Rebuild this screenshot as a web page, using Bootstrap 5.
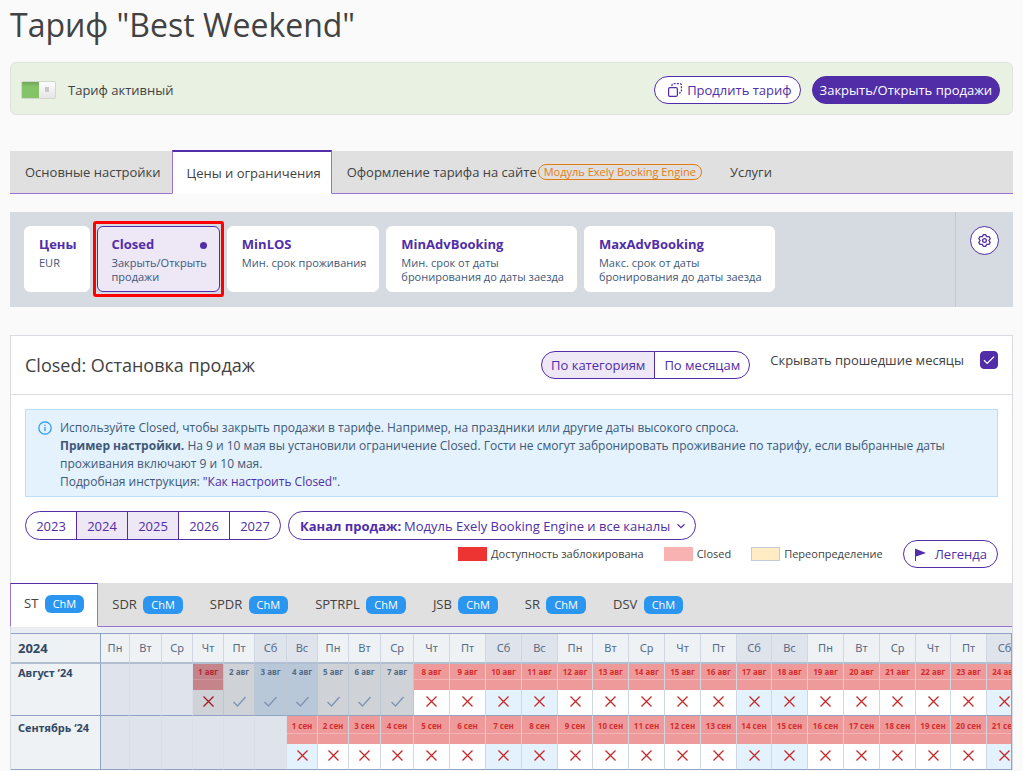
<!DOCTYPE html>
<html lang="ru">
<head>
<meta charset="utf-8">
<meta name="viewport" content="width=device-width, initial-scale=1">
<title>Тариф "Best Weekend"</title>
<link href="https://cdn.jsdelivr.net/npm/bootstrap@5.3.0/dist/css/bootstrap.min.css" rel="stylesheet">
<style>
:root { --violet: #512da8; --violet-soft: #ede7f6; --violet-line: #9575cd; --ink: #424242; --slate: #3f5878; }
body { font: 13px/18px "Open Sans", "Noto Sans", sans-serif; color: var(--ink); background: #fafafa; }
.page { padding: 0 10px; }
.page-title { font-size: 32px; line-height: 48px; padding-top: 1px; margin-bottom: 13px; font-weight: 400; }
a { color: var(--violet); text-decoration: none; }

.status-bar { background: #e8f1e2; border: 1px solid #dfe2df; border-radius: 6px; padding: 13px 12px 10px 10px; margin-bottom: 36px; }
.state-toggle { appearance: none; width: 35px; height: 18px; margin: 0; border-radius: 2px; border: 1px solid #cfd8ca;
  background: linear-gradient(#c8c8c8, #c8c8c8) 23px 5px / 4px 5px no-repeat, linear-gradient(#fdfdfd, #e2e2e2) 17px 0 / 18px 18px no-repeat, linear-gradient(#6fa857, #85c368 30%); }
.pill { font-size: 13px; line-height: 18px; padding: 4px 8px; border: 1px solid var(--violet); border-radius: 15px; color: var(--violet); background: #fff; }
.pill:hover, .pill.chosen { color: var(--violet); background: var(--violet-soft); border-color: var(--violet); }
.pill-solid { padding: 4px 7px; margin-left: 11px; }
.pill-solid, .pill-solid:hover { background: var(--violet); color: #fff; }

.strip { background: #e0e0e0; border: 0; }
.strip .nav-link { color: var(--ink); border: 0; border-bottom: 1px solid var(--violet-line); border-radius: 0; margin: 0; background: none; }
.strip .nav-link.active { color: var(--ink); background: #fff; border: 1px solid var(--violet-line); border-bottom-color: #fff; }
.strip .filler { border-bottom: 1px solid var(--violet-line); }
.strip-main { margin-bottom: 18px; }
.strip-main .nav-link { padding: 12px 11px 12px 15px; }
.strip-main .nav-link.active { border-top: 2px solid var(--violet); margin-top: -1px; padding: 12px 10px 11px 14px; }
.module-tag { font-size: 11px; line-height: 14px; color: #e57c13; border: 1px solid #e57c13; border-radius: 8px; padding: 0 5px; margin: 0 2px 0 1px; }

.modes { background: #d6dbe2; margin-bottom: 28px; }
.modes-list { padding: 14px 14px 15px; gap: 7px; }
.mode { background: #fff; border: 1px solid #fff; border-radius: 6px; padding: 8px 12px 7px 14px; min-height: 66px; text-align: left; color: var(--slate); font-size: 11px; line-height: 14px; }
.mode b { font-size: 13px; line-height: 18px; color: var(--violet); margin-bottom: 3px; }
.mode.chosen { background: var(--violet-soft); border-color: var(--violet); }
.mode .dot { width: 7px; height: 7px; background: var(--violet); }
.highlight { position: absolute; inset: -5px -4px; border: 3px solid #f00; border-radius: 3px; pointer-events: none; }
.modes-side { border-left: 1px solid #c3c9d3; padding: 14px; }
.gear { width: 29px; height: 29px; border: 1px solid var(--violet); border-radius: 50%; background: #fff; color: var(--violet); }

.board { background: #fff; border: 1px solid #d9dbe3; border-bottom: 0; }
.board-head { border-bottom: 1px solid #dcdce2; padding: 15px 14px; }
.board-title { font-size: 18px; line-height: 28px; font-weight: 400; margin: 0; }
.form-check-input.past { width: 18px; height: 18px; border-radius: 4px; margin: 0; }
.form-check-input.past:checked { background-color: var(--violet); border-color: var(--violet);
  background-image: url("data:image/svg+xml,%3Csvg xmlns='http://www.w3.org/2000/svg' viewBox='0 0 16 16'%3E%3Cpath d='M3 8.2l3.2 3.2L13 4.6' fill='none' stroke='%23fff' stroke-width='1.3'/%3E%3C/svg%3E"); }
.note { background-color: #e3f2fd; border: 1px solid #bbdefb; color: var(--slate); font-size: 12px; margin: 14px; padding: 9px 12px 5px; gap: 8px; }
.note svg { margin-top: 2px; }
.split { border-radius: 15px; }
.split .btn { padding: 4px 9px; }
.filters { padding: 0 14px; gap: 7px; }
.filters .pill { min-width: 52px; padding: 5px 9px 4px; }
.filters .channel { gap: 3px; padding-left: 11px; }
.channel select { appearance: none; border: 0; font: inherit; color: inherit; padding: 0 15px 0 0; outline: 0;
  background: url("data:image/svg+xml,%3Csvg xmlns='http://www.w3.org/2000/svg' viewBox='0 0 10 10'%3E%3Cpath d='M1.5 3.2 5 6.6l3.5-3.4' fill='none' stroke='%23512da8' stroke-width='1.2'/%3E%3C/svg%3E") right center / 10px 10px no-repeat; }
.keys { font-size: 11px; padding: 0 14px 15px; }
.keys .pill { padding: 4px 10px; }
.swatch { width: 29px; height: 14px; }
.swatch-blocked { background: #ee3333; }
.swatch-closed { background: #f9b2b2; }
.swatch-override { background: #ffecc4; border: 1px solid #c5cad8; }
.strip-rooms .nav-link { padding: 12px 13px 12px 14px; }
.strip-rooms .nav-link.active { padding: 10px 13px 13px; border-top-color: var(--violet); margin-left: -1px; }
.chm { font-size: 11px; line-height: 18px; color: #fff; background: #2a96f0; border-radius: 6px; padding: 0 8px; margin-left: 3px; }

.calendar-wrap { background: #eaedf1; padding-top: 6px; overflow: hidden; }
.calendar-view { border: 1px solid #8fa3c2; border-bottom: 0; margin-left: -1px; overflow: hidden; }
.calendar { table-layout: fixed; width: 0; border-collapse: separate; border-spacing: 0; font-family: "Noto Sans", sans-serif; color: #566b88; }
.calendar th, .calendar td { padding: 0; vertical-align: top; border-right: 1px solid #d0d7e3; border-bottom: 1px solid #8fa3c2; text-align: center; white-space: nowrap; }
.calendar td { background: #fff; }
.calendar thead th { height: 30px; vertical-align: middle; font-size: 11px; font-weight: 400; background: #eef2f5; border-bottom: 2px solid #b0bed2; }
.calendar thead th.rest, .calendar td.blank { background: #dfe3ec; }
.calendar td.blank { border-right-color: #d9dee8; }
.calendar th.month { text-align: left; padding-left: 7px; background: #eef2f5; border-right-color: #8fa3c2; color: #344966; font-size: 11px; font-weight: 700; line-height: 18px; }
.calendar thead th.month { font-size: 13px; font-weight: 700; }
.calendar .day { font-size: 8px; font-weight: 700; line-height: 15px; border-bottom: 1px solid #f3b4b6; }
.calendar .bar { height: 10px; }
.calendar .shut .day, .calendar .shut .bar { background-color: #ef9a9a; }
.calendar .shut .day { color: #d32f2f; }
.calendar .rest { background: #e3f2fd; }
.calendar .gone { background: #cfd3d8; border-right-color: #bcc5d2; }
.calendar .gone.rest { background: #b8c8d8; }
.calendar .gone .day { border-bottom-color: transparent; }
.calendar .gone.shut .day, .calendar .gone.shut .bar { background-color: #c5838a; }
.calendar .gone.shut .day { color: #b32a36; border-bottom-color: #cf969c; }
.calendar svg { display: block; margin: 4px auto 6px; }
.calendar .tall .day { padding-top: 2px; }
.calendar .tall th { line-height: 24px; }
</style>
</head>
<body>
<main class="page">
  <h1 class="page-title">Тариф "Best Weekend"</h1>

  <section class="status-bar d-flex align-items-center">
    <input class="state-toggle" type="checkbox" role="switch" id="state" checked>
    <label for="state" class="ms-2 ps-1">Тариф активный</label>
    <button type="button" class="btn pill ms-auto d-flex align-items-center">
      <svg class="ms-1 me-1" width="16" height="16" viewBox="0 0 16 16" fill="none" stroke="currentColor" stroke-width="1.2"><rect x="1.6" y="5.6" width="8.8" height="8.8" rx="1.5"/><path d="M5 4V3a1.5 1.5 0 0 1 1.5-1.4H13a1.4 1.4 0 0 1 1.4 1.4v6.5a1.4 1.4 0 0 1-1.4 1.4h-1" stroke-dasharray="2 1.2"/></svg>
      Продлить тариф
    </button>
    <button type="button" class="btn pill pill-solid">Закрыть/Открыть продажи</button>
  </section>

  <nav class="strip strip-main nav">
    <a class="nav-link" href="#">Основные настройки</a>
    <a class="nav-link active" href="#" aria-current="page">Цены и ограничения</a>
    <a class="nav-link d-flex align-items-center" href="#">Оформление тарифа на сайте <span class="module-tag">Модуль Exely Booking Engine</span></a>
    <a class="nav-link" href="#">Услуги</a>
    <span class="filler flex-fill"></span>
  </nav>

  <section class="modes d-flex">
    <div class="modes-list d-flex flex-fill">
      <button type="button" class="mode d-flex flex-column"><b>Цены</b>EUR</button>
      <div class="position-relative">
        <button type="button" class="mode chosen"><span class="d-flex align-items-center justify-content-between"><b>Closed</b><span class="dot rounded-circle"></span></span>Закрыть/Открыть<br>продажи</button>
        <span class="highlight"></span>
      </div>
      <button type="button" class="mode d-flex flex-column"><b>MinLOS</b>Мин. срок проживания</button>
      <button type="button" class="mode d-flex flex-column"><b>MinAdvBooking</b><span>Мин. срок от даты<br>бронирования до даты заезда</span></button>
      <button type="button" class="mode d-flex flex-column"><b>MaxAdvBooking</b><span>Макс. срок от даты<br>бронирования до даты заезда</span></button>
    </div>
    <div class="modes-side">
      <button type="button" class="gear d-flex align-items-center justify-content-center p-0" aria-label="Настройки">
        <svg width="15" height="15" viewBox="0 0 16 16" fill="none" stroke="currentColor" stroke-width="1.4" stroke-linejoin="round"><path d="M6.8 1.7h2.4l1.15 2.23 2.45-.13 1.25 2.1L12.7 8l1.35 2.1-1.25 2.1-2.45-.13L9.2 14.3H6.8l-1.15-2.23-2.45.13-1.25-2.1L3.3 8 1.95 5.9l1.25-2.1 2.45.13z"/><circle cx="8" cy="8" r="2"/></svg>
      </button>
    </div>
  </section>

  <section class="board">
    <header class="board-head d-flex align-items-start">
      <h2 class="board-title me-auto">Closed: Остановка продаж</h2>
      <div class="btn-group split me-3" role="group" aria-label="Вид">
        <button type="button" class="btn pill chosen">По категориям</button>
        <button type="button" class="btn pill">По месяцам</button>
      </div>
      <label for="past" class="ms-1 me-3">Скрывать прошедшие месяцы</label>
      <input class="form-check-input past" type="checkbox" id="past" checked>
    </header>

    <div class="note d-flex">
      <svg class="flex-shrink-0" width="14" height="14" viewBox="0 0 14 14" fill="none" stroke="#2196f3" stroke-width="1.2"><circle cx="7" cy="7" r="6.2"/><path d="M7 6v4M7 3.8v1.3"/></svg>
      <div>Используйте Closed, чтобы закрыть продажи в тарифе. Например, на праздники или другие даты высокого спроса.<br>
        <b>Пример настройки.</b> На 9 и 10 мая вы установили ограничение Closed. Гости не смогут забронировать проживание по тарифу, если выбранные даты проживания включают 9 и 10 мая.<br>
        Подробная инструкция: <a href="#">"Как настроить Closed"</a>.</div>
    </div>

    <div class="filters d-flex">
      <div class="btn-group split" role="group" aria-label="Год">
        <button type="button" class="btn pill">2023</button>
        <button type="button" class="btn pill chosen">2024</button>
        <button type="button" class="btn pill chosen">2025</button>
        <button type="button" class="btn pill">2026</button>
        <button type="button" class="btn pill">2027</button>
      </div>
      <div class="pill channel d-flex">
        <label for="channel"><b>Канал продаж:</b></label>
        <select id="channel"><option>Модуль Exely Booking Engine и все каналы</option></select>
      </div>
    </div>

    <div class="keys d-flex align-items-center justify-content-end">
      <span class="swatch swatch-blocked me-1"></span><span class="me-3 pe-1">Доступность заблокирована</span>
      <span class="swatch swatch-closed me-1"></span><span class="me-3 pe-1">Closed</span>
      <span class="swatch swatch-override me-1"></span><span class="me-3 pe-1">Переопределение</span>
      <button type="button" class="btn pill d-flex align-items-center gap-2"><svg width="13" height="14" viewBox="0 0 13 14"><path d="M1 1.5 12 6 2 9.5V14H1z" fill="currentColor"/></svg>Легенда</button>
    </div>

    <nav class="strip strip-rooms nav">
      <a class="nav-link active" href="#">ST <span class="chm d-inline-block">ChM</span></a>
      <a class="nav-link" href="#">SDR <span class="chm d-inline-block">ChM</span></a>
      <a class="nav-link" href="#">SPDR <span class="chm d-inline-block">ChM</span></a>
      <a class="nav-link" href="#">SPTRPL <span class="chm d-inline-block">ChM</span></a>
      <a class="nav-link" href="#">JSB <span class="chm d-inline-block">ChM</span></a>
      <a class="nav-link" href="#">SR <span class="chm d-inline-block">ChM</span></a>
      <a class="nav-link" href="#">DSV <span class="chm d-inline-block">ChM</span></a>
      <span class="filler flex-fill"></span>
    </nav>

    <div class="calendar-wrap"><div class="calendar-view"><table class="calendar" id="calendar"></table></div></div>
  </section>
</main>

<script src="https://cdn.jsdelivr.net/npm/bootstrap@5.3.0/dist/js/bootstrap.bundle.min.js"></script>
<script>
// Calendar grid: one column per weekday slot, one row per month.
const weekdays = ['Пн', 'Вт', 'Ср', 'Чт', 'Пт', 'Сб', 'Вс'];
const widths = [29, 32, 31, 31, 31, 32, 31, 31, 32, 33];
while (widths.length < 27) widths.push(widths.length % 5 === 4 ? 35 : 36);
const months = [
  { name: 'Август ‘24', short: 'авг', offset: 3, today: 8, open: [2, 7] },
  { name: 'Сентябрь ‘24', short: 'сен', offset: 6, today: 0, open: [0, 0], tall: true }
];
const cross = '<svg width="15" height="15" viewBox="0 0 15 15" fill="none" stroke="COLOR" stroke-width="1.3"><path d="M2.5 2.5l10 10M12.5 2.5l-10 10"/></svg>';
const tick = '<svg width="15" height="15" viewBox="0 0 15 15" fill="none" stroke="#8295b3" stroke-width="1.5"><path d="M1.5 8l4 4 8-9"/></svg>';
const isRest = i => i % 7 > 4;

let html = '<colgroup><col style="width:90px">' + widths.map(w => `<col style="width:${w}px">`).join('') + '</colgroup>';
html += '<thead><tr><th class="month">2024</th>' + widths.map((w, i) => `<th class="${isRest(i) ? 'rest' : ''}">${weekdays[i % 7]}</th>`).join('') + '</tr></thead><tbody>';
for (const m of months) {
  html += `<tr class="${m.tall ? 'tall' : ''}"><th class="month">${m.name}</th>`;
  widths.forEach((w, i) => {
    const d = i - m.offset + 1;
    if (d < 1) { html += '<td class="blank"></td>'; return; }
    const gone = d < m.today, open = d >= m.open[0] && d <= m.open[1];
    const cls = [isRest(i) && 'rest', gone && 'gone', !open && 'shut'].filter(Boolean).join(' ');
    html += `<td class="${cls}"><div class="day">${d} ${m.short}</div><div class="bar"></div>${open ? tick : cross.replace('COLOR', gone ? '#a01822' : '#c62828')}</td>`;
  });
  html += '</tr>';
}
document.getElementById('calendar').innerHTML = html + '</tbody>';
</script>
</body>
</html>
